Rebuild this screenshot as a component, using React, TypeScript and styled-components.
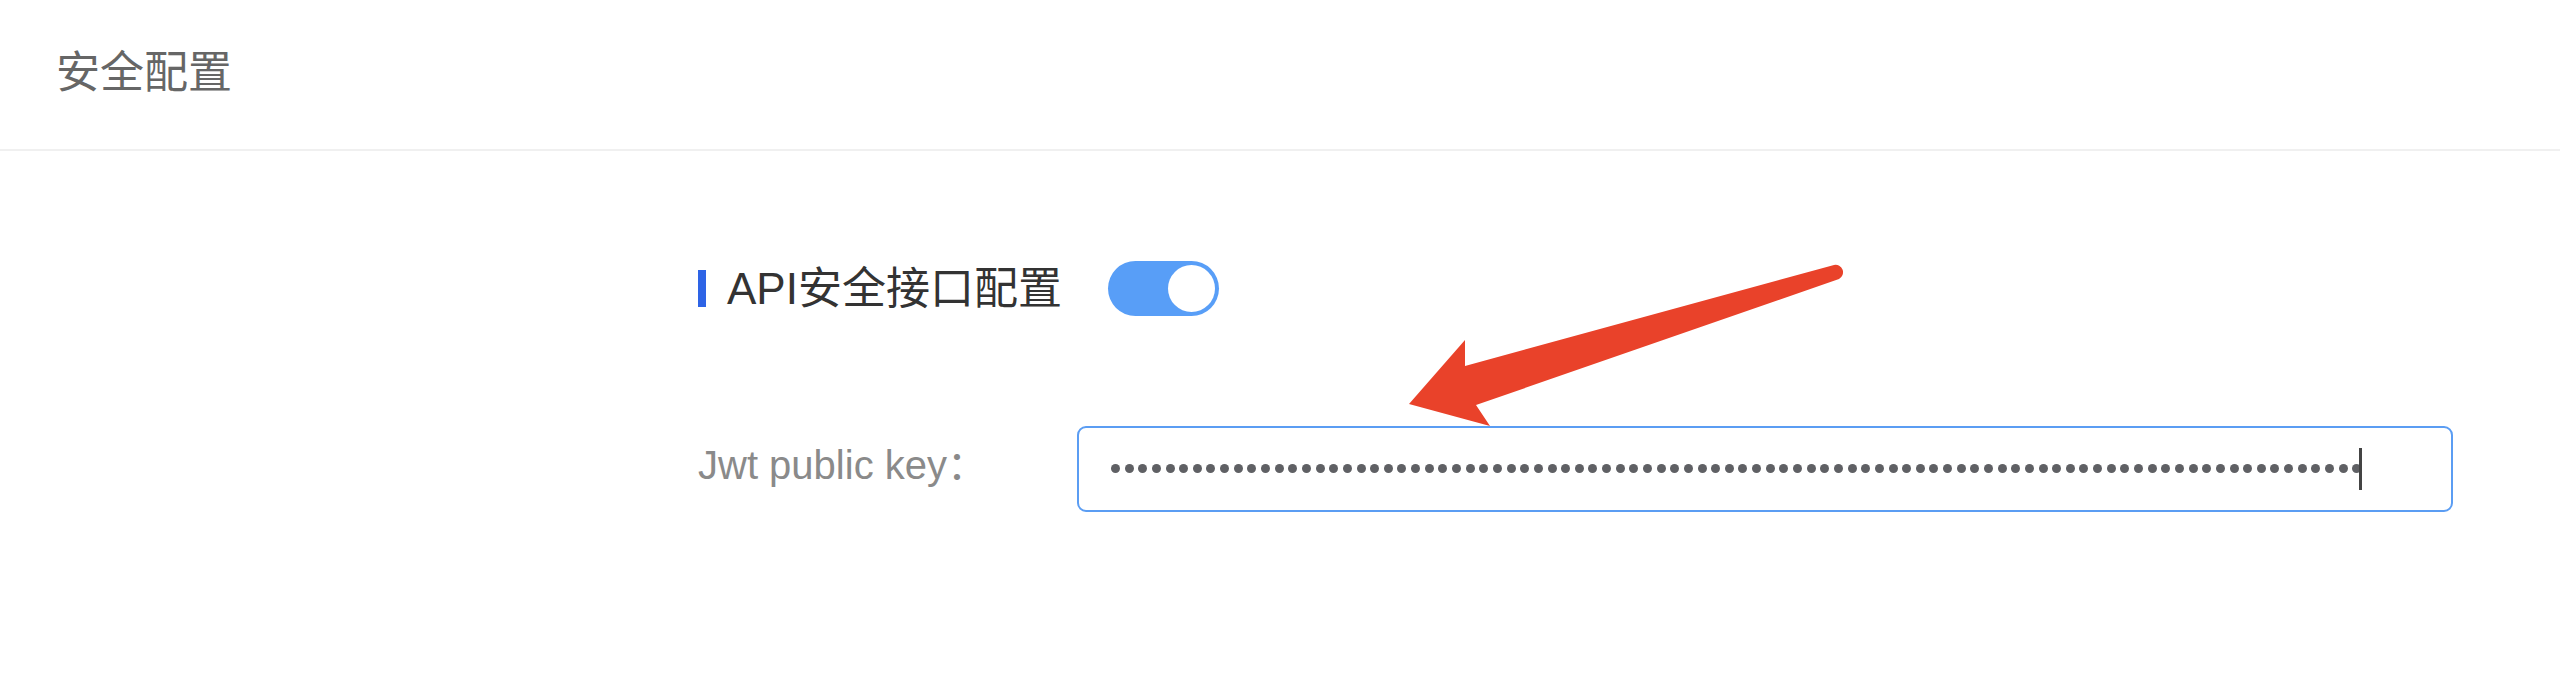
import React from 'react'
import styled, { createGlobalStyle } from 'styled-components'

const GlobalStyle = createGlobalStyle`
    html, body {
        margin: 0;
        padding: 0;
        background: #ffffff;
    }
    body {
        font-family: 'Liberation Sans', 'Noto Sans CJK SC', sans-serif;
    }
`

const Page = styled.div`
    position: relative;
    width: 2560px;
    height: 695px;
    background: #ffffff;
    overflow: hidden;
`
const Header = styled.div`
    height: 151px;
    display: flex;
    align-items: center;
    padding: 0 0 12px 56px;
    box-sizing: border-box;
    border-bottom: 2px solid #f0f0f0;
`
const HeaderTitle = styled.p`
    margin: 0;
    font-size: 44px;
    color: #666666;
    font-family: 'Noto Sans CJK SC', sans-serif;
    line-height: 1;
`
const Body = styled.div`
    display: flex;
    flex-direction: column;
    padding: 110px 0 0 698px;
    gap: 110px;
`
const SectionRow = styled.div`
    display: flex;
    align-items: center;
    height: 55px;
`
const SectionBar = styled.span`
    width: 8px;
    height: 37px;
    background: #2e64e6;
    margin-right: 21px;
`
const SectionTitle = styled.p`
    margin: 0;
    font-size: 44px;
    color: #333333;
    line-height: 1;
    margin-right: 46px;
`
const Switch = styled.div<{ $on: boolean }>`
    width: 111px;
    height: 55px;
    border-radius: 28px;
    background: ${(p) => (p.$on ? '#589ef7' : '#d8d8d8')};
    display: flex;
    align-items: center;
    justify-content: ${(p) => (p.$on ? 'flex-end' : 'flex-start')};
    padding: 0 4px;
    box-sizing: border-box;
`
const Knob = styled.span`
    width: 47px;
    height: 47px;
    border-radius: 50%;
    background: #ffffff;
`
const FormRow = styled.div`
    display: flex;
    align-items: center;
`
const Label = styled.label`
    width: 379px;
    font-size: 40px;
    color: #8a8a8a;
    padding-bottom: 14px;
`
const Field = styled.div`
    width: 1376px;
    height: 86px;
    box-sizing: border-box;
    border: 2px solid #5b9df3;
    border-radius: 9px;
    display: flex;
    align-items: center;
    padding-left: 32px;
`
const Dots = styled.div`
    display: flex;
    align-items: center;
    gap: 4.65px;
    margin-bottom: 2px;
`
const Dot = styled.span`
    width: 9px;
    height: 9px;
    border-radius: 50%;
    background: #5f6064;
`
const Caret = styled.span`
    width: 3px;
    height: 42px;
    background: #444444;
    margin-left: -2px;
`
const Arrow = styled.svg`
    position: absolute;
    left: 1400px;
    top: 255px;
    pointer-events: none;
`

const keyLength = 92

const App: React.FC = () => {
    return (
        <Page>
            <GlobalStyle />
            <Header>
                <HeaderTitle>安全配置</HeaderTitle>
            </Header>
            <Body>
                <SectionRow>
                    <SectionBar />
                    <SectionTitle>API安全接口配置</SectionTitle>
                    <Switch $on={true}>
                        <Knob />
                    </Switch>
                </SectionRow>
                <FormRow>
                    <Label>Jwt public key：</Label>
                    <Field>
                        <Dots>
                            {Array.from({ length: keyLength }).map((_, i) => (
                                <Dot key={i} />
                            ))}
                        </Dots>
                        <Caret />
                    </Field>
                </FormRow>
            </Body>
            <Arrow width="460" height="180" viewBox="0 0 460 180">
                <path
                    d="M434 10 L65 111 L65 85 L9 149 L90 171 L76 150 L439 24 A7.5 7.5 0 0 0 434 10 Z"
                    fill="#e9422a"
                />
            </Arrow>
        </Page>
    )
}

export default App
